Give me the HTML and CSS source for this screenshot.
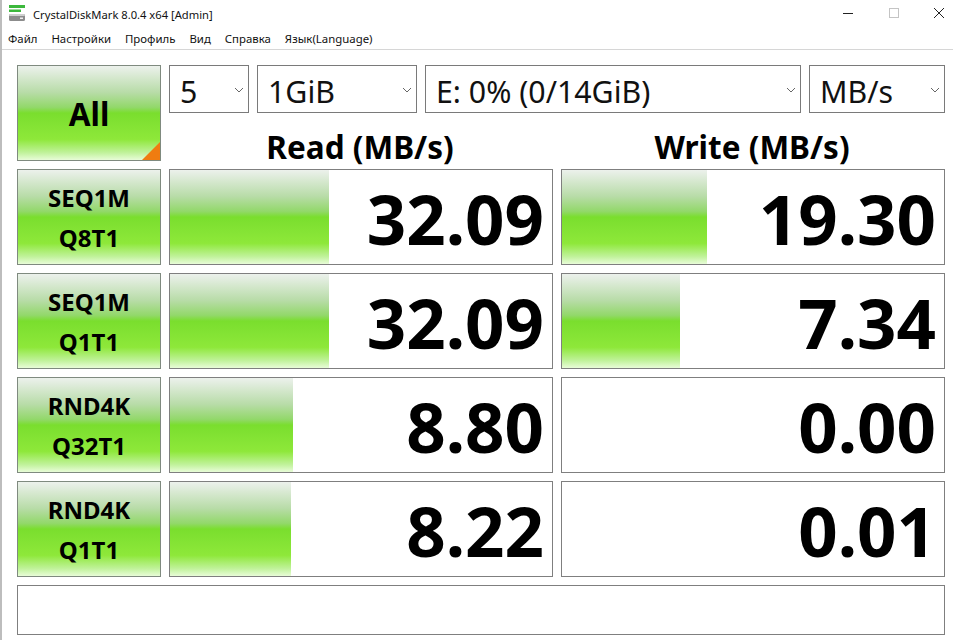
FILE: index.html
```html
<!DOCTYPE html>
<html lang="ru">
<head>
  <meta charset="UTF-8">
  <title>CrystalDiskMark 8.0.4 x64 [Admin]</title>
  <link rel="stylesheet" href="styles.css">
</head>
<body>

  <div class="titlebar">
    <svg class="app-icon" width="16" height="16" viewBox="0 0 16 16">
      <rect x="0" y="0" width="16" height="3" fill="#3cb83c"/>
      <rect x="0" y="4.5" width="12" height="2.5" fill="#3cb83c"/>
      <rect x="0" y="9" width="16" height="7" rx="1.5" fill="#8c8c8c"/>
      <rect x="0" y="9" width="16" height="2" rx="1" fill="#cfcfcf"/>
      <rect x="11" y="12.5" width="3" height="1.5" fill="#eeeeee"/>
    </svg>
    <span class="app-title">CrystalDiskMark 8.0.4 x64 [Admin]</span>
    <div class="win-buttons">
      <svg width="46" height="28" viewBox="0 0 46 28"><path d="M18 13.5h10" stroke="#222" fill="none"/></svg>
      <svg width="45" height="28" viewBox="0 0 45 28"><rect x="18.5" y="8.5" width="9" height="9" stroke="#c4c4c4" fill="none"/></svg>
      <svg width="46" height="28" viewBox="0 0 46 28"><path d="M18 8l10 10M28 8L18 18" stroke="#222" fill="none"/></svg>
    </div>
  </div>

  <nav class="menu">
    <a>Файл</a>
    <a>Настройки</a>
    <a>Профиль</a>
    <a>Вид</a>
    <a>Справка</a>
    <a>Язык(Language)</a>
  </nav>

  <main class="panel">
    <div class="btn btn-all">All<span class="corner"></span></div>
    <div class="top-right">
      <div class="selects">
        <div class="select sel-count">5<svg class="chev" width="10" height="6" viewBox="0 0 10 6"><path d="M1 1l4 4 4-4" stroke="#666" fill="none"/></svg></div>
        <div class="select sel-size">1GiB<svg class="chev" width="10" height="6" viewBox="0 0 10 6"><path d="M1 1l4 4 4-4" stroke="#666" fill="none"/></svg></div>
        <div class="select sel-drive">E: 0% (0/14GiB)<svg class="chev" width="10" height="6" viewBox="0 0 10 6"><path d="M1 1l4 4 4-4" stroke="#666" fill="none"/></svg></div>
        <div class="select sel-unit">MB/s<svg class="chev" width="10" height="6" viewBox="0 0 10 6"><path d="M1 1l4 4 4-4" stroke="#666" fill="none"/></svg></div>
      </div>
      <div class="headings">
        <div>Read (MB/s)</div>
        <div>Write (MB/s)</div>
      </div>
    </div>

    <div class="btn">SEQ1M<br>Q8T1</div>
    <div class="meter"><div class="bar" style="width:159px"></div><span>32.09</span></div>
    <div class="meter"><div class="bar" style="width:145px"></div><span>19.30</span></div>

    <div class="btn">SEQ1M<br>Q1T1</div>
    <div class="meter"><div class="bar" style="width:159px"></div><span>32.09</span></div>
    <div class="meter"><div class="bar" style="width:118px"></div><span>7.34</span></div>

    <div class="btn">RND4K<br>Q32T1</div>
    <div class="meter"><div class="bar" style="width:123px"></div><span>8.80</span></div>
    <div class="meter"><span>0.00</span></div>

    <div class="btn">RND4K<br>Q1T1</div>
    <div class="meter"><div class="bar" style="width:121px"></div><span>8.22</span></div>
    <div class="meter"><span>0.01</span></div>

    <div class="comment"></div>
  </main>

</body>
</html>
```

FILE: styles.css
```css
html, body {
  height: 100%;
}

body {
  margin: 0;
  background: #fff;
  color: #000;
  font-family: "Noto Sans", "Open Sans", sans-serif;
  overflow: hidden;
  border-left: 2px solid #bdbdbd;
  box-sizing: border-box;
}

.titlebar {
  display: flex;
  align-items: center;
  height: 28px;
  padding-left: 7px;
  font-size: 11.2px;
  color: #111;
  overflow: hidden;
}

.app-icon {
  margin: -2px 8px 0 0;
}

.win-buttons {
  display: flex;
  flex-shrink: 0;
  margin-left: auto;
  margin-right: -9px;
}

.menu {
  display: flex;
  gap: 14px;
  height: 21px;
  align-items: center;
  padding-left: 6px;
  font-size: 11.4px;
  color: #111;
  border-bottom: 1px solid #d6d6d6;
}

.panel {
  display: grid;
  grid-template-columns: 144px 384px 384px;
  grid-template-rows: repeat(5, 96px) 50px;
  gap: 8px;
  padding: 15px 0 0 15px;
}

.btn {
  position: relative;
  box-sizing: border-box;
  border: 1px solid #7f8a7f;
  background: linear-gradient(#ecf1ec 0%, #b8dca8 28%, #92d86a 44%, #7ade2e 50%, #8ee83a 78%, #c0f29a 92%, #e8fcd8 100%);
  display: flex;
  align-items: center;
  justify-content: center;
  text-align: center;
  font-weight: 700;
  font-size: 24px;
  line-height: 40px;
  padding-top: 2px;
}

.btn-all {
  font-size: 31.5px;
  padding-top: 2px;
}

.corner {
  position: absolute;
  right: 0;
  bottom: 0;
  width: 0;
  height: 0;
  border-left: 18px solid transparent;
  border-bottom: 18px solid #f07c10;
}

.top-right {
  grid-column: span 2;
  display: flex;
  flex-direction: column;
}

.selects {
  display: flex;
  gap: 8px;
  height: 48px;
}

.select {
  position: relative;
  box-sizing: border-box;
  border: 1px solid #7a7a7a;
  display: flex;
  align-items: center;
  padding: 4px 0 0 10px;
  font-size: 30.3px;
  color: #111;
}

.chev {
  position: absolute;
  right: 4px;
  top: 21px;
}

.sel-count { width: 80px; }
.sel-size { width: 160px; }
.sel-drive { width: 376px; }
.sel-unit { width: 136px; }

.headings {
  display: grid;
  grid-template-columns: 384px 384px;
  gap: 8px;
  height: 48px;
}

.headings div {
  display: flex;
  align-items: center;
  justify-content: center;
  font-size: 31.5px;
  font-weight: 700;
  padding: 12px 2px 0 0;
  box-sizing: border-box;
}

.meter {
  position: relative;
  box-sizing: border-box;
  border: 1px solid #7f7f7f;
  display: flex;
  align-items: center;
  justify-content: flex-end;
  padding: 3px 8px 0 0;
}

.bar {
  position: absolute;
  left: 0;
  top: 0;
  bottom: 0;
  background: linear-gradient(#ecf1ec 0%, #b8dca8 28%, #92d86a 44%, #7ade2e 50%, #8ee83a 78%, #c0f29a 92%, #e8fcd8 100%);
}

.meter span {
  position: relative;
  font-size: 69px;
  font-weight: 700;
  line-height: 1;
}

.comment {
  grid-column: 1 / -1;
  box-sizing: border-box;
  border: 1px solid #7f7f7f;
}
```
